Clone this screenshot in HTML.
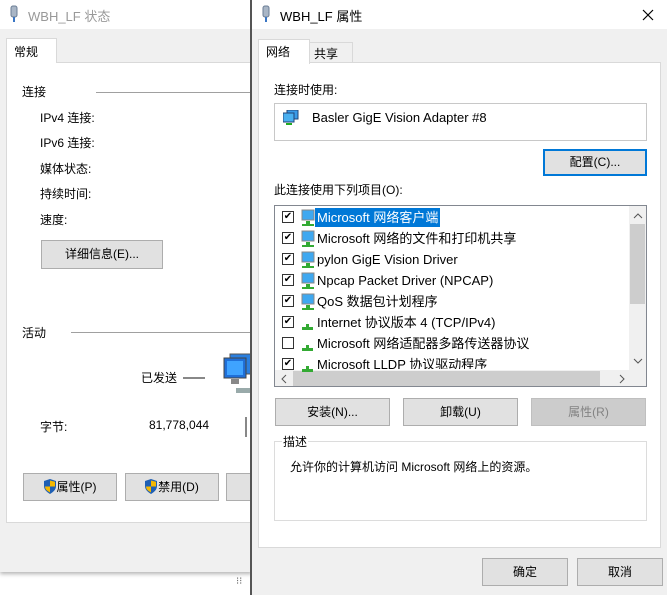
<!DOCTYPE html>
<html><head><meta charset="utf-8"><style>
*{margin:0;padding:0;box-sizing:border-box}
body{width:667px;height:595px;position:relative;overflow:hidden;background:#fff;font-family:"Liberation Sans","Microsoft YaHei","Noto Sans CJK SC",sans-serif;font-size:12px;color:#000}
.a{position:absolute;white-space:nowrap}
.btn{position:absolute;background:#e1e1e1;border:1px solid #adadad;text-align:center;font-size:12px}
.ln{position:absolute;height:1px;background:#a0a0a0}
.sh{display:inline-block;vertical-align:-3px;margin-right:1px}
</style></head><body>
<!-- left window -->
<div class="a" style="left:0;top:0;width:252px;height:572px;background:#f0f0f0;box-shadow:0 2px 4px rgba(0,0,0,.3)"></div>
<div class="a" style="left:0;top:0;width:252px;height:29px;background:#fff"></div>
<svg class="a" style="left:9px;top:5px" width="10" height="18"><rect x="2" y="1" width="6" height="11" rx="2" fill="#a9b6c6" stroke="#6b7d95"/><rect x="4" y="12" width="2" height="5" fill="#3a76c4"/></svg>
<div class="a" style="left:28px;top:6px;font-size:13px;color:#999">WBH_LF 状态</div>
<div class="a" style="left:6px;top:62px;width:246px;height:461px;background:#fff;border:1px solid #d9d9d9"></div>
<div class="a" style="left:6px;top:38px;width:51px;height:25px;background:#fff;border:1px solid #d9d9d9;border-bottom:none;padding:4px 0 0 7px">常规</div>
<div class="a" style="left:22px;top:83px">连接</div><div class="ln" style="left:96px;top:92px;width:156px"></div>
<div class="a" style="left:40px;top:109px">IPv4 连接:</div>
<div class="a" style="left:40px;top:134px">IPv6 连接:</div>
<div class="a" style="left:40px;top:160px">媒体状态:</div>
<div class="a" style="left:40px;top:185px">持续时间:</div>
<div class="a" style="left:40px;top:211px">速度:</div>
<div class="btn" style="left:41px;top:240px;width:122px;height:29px;line-height:27px">详细信息(E)...</div>
<div class="a" style="left:22px;top:324px">活动</div><div class="ln" style="left:71px;top:332px;width:181px"></div>
<div class="a" style="left:141px;top:369px">已发送</div><div class="a" style="left:183px;top:377px;width:22px;height:2px;background:#888"></div>
<svg class="a" style="left:222px;top:352px" width="30" height="45"><rect x="8" y="2" width="22" height="20" fill="#2a7fe0" stroke="#555"/><rect x="2" y="6" width="22" height="20" fill="#1f6fd8" stroke="#444"/><rect x="5" y="9" width="16" height="14" fill="#3fa3ff"/><rect x="9" y="27" width="8" height="5" fill="#888"/><rect x="14" y="36" width="16" height="5" fill="#9aa"/></svg>
<div class="a" style="left:40px;top:418px">字节:</div>
<div class="a" style="left:149px;top:418px">81,778,044</div>
<div class="a" style="left:245px;top:417px;width:2px;height:20px;background:#888"></div>
<div class="btn" style="left:23px;top:473px;width:94px;height:28px;line-height:26px"><svg class="sh" width="12" height="15"><path d="M6 0L12 2V7C12 11 9 13 6 15C3 13 0 11 0 7V2Z" fill="#1e5fb4"/><path d="M6 1.5V7.5H11V7C11 5 11 3 11 2.8L6 1.5ZM6 7.5V13.5C3.5 12 1 10.5 1 7.5Z" fill="#f5b800"/></svg>属性(P)</div>
<div class="btn" style="left:125px;top:473px;width:94px;height:28px;line-height:26px"><svg class="sh" width="12" height="15"><path d="M6 0L12 2V7C12 11 9 13 6 15C3 13 0 11 0 7V2Z" fill="#1e5fb4"/><path d="M6 1.5V7.5H11V7C11 5 11 3 11 2.8L6 1.5ZM6 7.5V13.5C3.5 12 1 10.5 1 7.5Z" fill="#f5b800"/></svg>禁用(D)</div>
<div class="btn" style="left:226px;top:473px;width:30px;height:28px"></div>
<div class="a" style="left:236px;top:576px;font-size:10px;color:#666">⁝⁝</div>
<!-- right window -->
<div class="a" style="left:250px;top:0;width:417px;height:595px;background:#f0f0f0;border-left:2px solid #555"></div>
<div class="a" style="left:252px;top:0;width:415px;height:29px;background:#fff"></div>
<svg class="a" style="left:261px;top:5px" width="10" height="18"><rect x="2" y="1" width="6" height="11" rx="2" fill="#a9b6c6" stroke="#6b7d95"/><rect x="4" y="12" width="2" height="5" fill="#3a76c4"/></svg>
<div class="a" style="left:280px;top:6px;font-size:13px">WBH_LF 属性</div>
<svg class="a" style="left:642px;top:9px" width="12" height="12"><path d="M1 1L11 11M11 1L1 11" stroke="#000" stroke-width="1.2"/></svg>
<div class="a" style="left:258px;top:62px;width:403px;height:486px;background:#fff;border:1px solid #d9d9d9"></div>
<div class="a" style="left:309px;top:42px;width:44px;height:21px;background:#f0f0f0;border:1px solid #d9d9d9;padding:2px 0 0 4px">共享</div>
<div class="a" style="left:258px;top:39px;width:52px;height:25px;background:#fff;border:1px solid #d9d9d9;border-bottom:none;padding:3px 0 0 7px">网络</div>
<div class="a" style="left:274px;top:81px">连接时使用:</div>
<div class="a" style="left:274px;top:103px;width:373px;height:38px;border:1px solid #c8c8c8;background:#fff"></div>
<svg class="a" style="left:283px;top:110px" width="16" height="16"><rect x="4" y="0" width="11" height="9" fill="#3a9be8" stroke="#247"/><rect x="0" y="3" width="11" height="9" fill="#4ab0f0" stroke="#247"/><rect x="3" y="13" width="6" height="2" fill="#2a2"/></svg>
<div class="a" style="left:312px;top:110px;font-size:13px">Basler GigE Vision Adapter #8</div>
<div class="btn" style="left:543px;top:149px;width:104px;height:27px;line-height:23px;border:2px solid #0078d7">配置(C)...</div>
<div class="a" style="left:274px;top:181px">此连接使用下列项目(O):</div>
<div class="a" style="left:274px;top:205px;width:373px;height:182px;border:1px solid #828790;background:#fff;overflow:hidden">
<div class="a" style="left:354px;top:0;width:17px;height:164px;background:#f0f0f0"></div>
<div class="a" style="left:355px;top:18px;width:15px;height:80px;background:#cdcdcd"></div>
<svg class="a" style="left:358px;top:7px" width="10" height="6"><path d="M1 5L5 1L9 5" stroke="#555" fill="none"/></svg>
<svg class="a" style="left:358px;top:152px" width="10" height="6"><path d="M1 1L5 5L9 1" stroke="#555" fill="none"/></svg>
<div class="a" style="left:0;top:164px;width:371px;height:17px;background:#f0f0f0"></div>
<div class="a" style="left:18px;top:165px;width:307px;height:15px;background:#cdcdcd"></div>
<svg class="a" style="left:6px;top:168px" width="6" height="10"><path d="M5 1L1 5L5 9" stroke="#555" fill="none"/></svg>
<svg class="a" style="left:344px;top:168px" width="6" height="10"><path d="M1 1L5 5L1 9" stroke="#555" fill="none"/></svg>
</div>
<div id="list"></div>
<script>
var items=[["Microsoft 网络客户端",1,1],["Microsoft 网络的文件和打印机共享",1,1],["pylon GigE Vision Driver",1,1],["Npcap Packet Driver (NPCAP)",1,1],["QoS 数据包计划程序",1,1],["Internet 协议版本 4 (TCP/IPv4)",1,0],["Microsoft 网络适配器多路传送器协议",0,0],["Microsoft LLDP 协议驱动程序",1,0]];
var h="";items.forEach(function(it,i){var y=208+i*21;
var clip=(y+19>369)?'height:'+(369-y)+'px;overflow:hidden;':'';
h+='<div class="a" style="left:282px;top:'+(y+3)+'px;width:12px;height:12px;border:1px solid #333;background:#fff;font-size:10px;line-height:10px;text-align:center">'+(it[1]?'✔':'')+'</div>';
if(it[2])h+='<svg class="a" style="left:299px;top:'+(y+1)+'px" width="16" height="18"><rect x="3" y="1" width="12" height="10" fill="#3fa8f0" stroke="#888"/><rect x="7" y="12" width="4" height="3" fill="#3a3"/><rect x="3" y="15" width="12" height="2" fill="#3a3"/></svg>';
else h+='<svg class="a" style="left:299px;top:'+(y+1)+'px" width="16" height="18"><rect x="7" y="10" width="3" height="4" fill="#3a3"/><rect x="3" y="13" width="11" height="3" fill="#3a3"/></svg>';
h+='<div class="a" style="left:315px;top:'+y+'px;font-size:13px;line-height:19px;height:19px;padding:0 2px;'+clip+(i==0?'background:#0078d7;color:#fff':'')+'">'+it[0]+'</div>';});
document.getElementById('list').outerHTML=h;
</script>
<div class="btn" style="left:275px;top:398px;width:115px;height:28px;line-height:26px">安装(N)...</div>
<div class="btn" style="left:403px;top:398px;width:115px;height:28px;line-height:26px">卸载(U)</div>
<div class="btn" style="left:531px;top:398px;width:115px;height:28px;line-height:26px;background:#cccccc;border-color:#bfbfbf;color:#838383">属性(R)</div>
<div class="a" style="left:274px;top:441px;width:373px;height:80px;border:1px solid #dcdcdc"></div>
<div class="a" style="left:282px;top:433px;background:#fff;padding:0 1px">描述</div>
<div class="a" style="left:290px;top:458px">允许你的计算机访问 Microsoft 网络上的资源。</div>
<div class="btn" style="left:482px;top:558px;width:86px;height:28px;line-height:26px">确定</div>
<div class="btn" style="left:577px;top:558px;width:86px;height:28px;line-height:26px">取消</div>
</body></html>
